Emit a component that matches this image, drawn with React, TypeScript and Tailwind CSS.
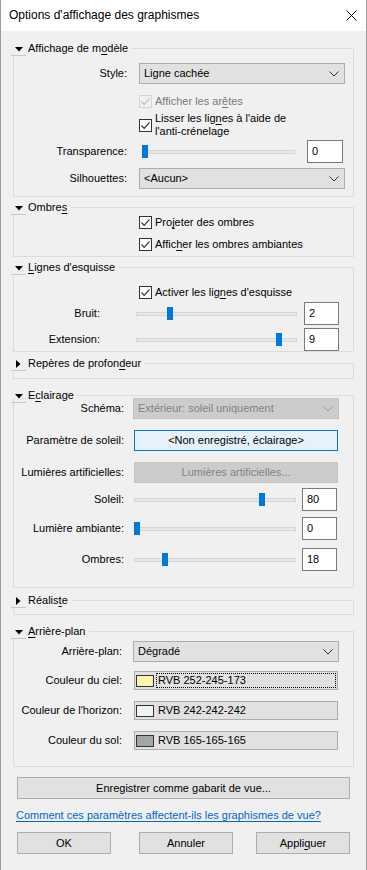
import React from "react";

function Tri({ open }: { open: boolean }) {
  return open ? (
    <svg width="8" height="5" viewBox="0 0 8 5">
      <path d="M0 0H8L4 4.5Z" fill="#000" />
    </svg>
  ) : (
    <svg width="5" height="8" viewBox="0 0 5 8">
      <path d="M0 0V8L4.5 4Z" fill="#000" />
    </svg>
  );
}

function U({ children }: { children: React.ReactNode }) {
  return <span className="underline underline-offset-[2px]">{children}</span>;
}

function Section({
  title,
  open = true,
  className = "",
  boxClass = "",
  children,
}: {
  title: React.ReactNode;
  open?: boolean;
  className?: string;
  boxClass?: string;
  children?: React.ReactNode;
}) {
  return (
    <div className={`ml-[10px] w-[343px] ${className}`}>
      <div className="flex h-[15px]">
        <div className="flex h-[15px] w-[15px] shrink-0 items-center justify-center border-b border-[#c8c8c8] pt-[2px]">
          <Tri open={open} />
        </div>
        <span className="ml-[2px] whitespace-nowrap leading-[15px]">{title}</span>
        <div className="ml-[4px] mt-[7px] h-[8px] flex-1 border-r border-t border-[#dcdcdc]" />
      </div>
      <div className={`ml-[2px] border-x border-b border-[#dcdcdc] ${boxClass}`}>{children}</div>
    </div>
  );
}

function Check({ disabled }: { disabled?: boolean }) {
  return (
    <div
      className={`flex h-[13px] w-[13px] shrink-0 items-center justify-center border ${
        disabled ? "border-[#d4d4d4] bg-[#f0f0f0]" : "border-[#333333] bg-white"
      }`}
    >
      <svg width="11" height="11" viewBox="0 0 11 11">
        <path
          d="M1.5 5.5L4.2 8.3L9.5 2.3"
          fill="none"
          stroke={disabled ? "#bcbcbc" : "#333333"}
          strokeWidth="1.2"
        />
      </svg>
    </div>
  );
}

function Chevron({ color = "#333" }: { color?: string }) {
  return (
    <svg width="10" height="6" viewBox="0 0 10 6">
      <path d="M0.5 0.5L5 5L9.5 0.5" fill="none" stroke={color} strokeWidth="1" />
    </svg>
  );
}

function Select({
  value,
  className = "",
  disabled,
}: {
  value: string;
  className?: string;
  disabled?: boolean;
}) {
  return (
    <div
      className={`flex h-[21px] items-center justify-between border pl-[4px] pr-[5px] ${
        disabled ? "border-[#c4c4c4] bg-[#cccccc] text-[#838383]" : "border-[#adadad] bg-[#e1e1e1]"
      } ${className}`}
    >
      <span className="whitespace-nowrap">{value}</span>
      <Chevron color={disabled ? "#9a9a9a" : "#333"} />
    </div>
  );
}

function Slider({ pct, className = "" }: { pct: number; className?: string }) {
  return (
    <div className={`relative h-[13px] ${className}`}>
      <div className="absolute left-0 right-0 top-[5px] h-[4px] border border-[#d6d6d6] bg-[#e7e7e7]" />
      <div
        className="absolute top-0 h-[13px] w-[6px] bg-[#0078d7]"
        style={{ left: `calc(${pct} * (100% - 6px))` }}
      />
    </div>
  );
}

function Field({ value, className = "" }: { value: string; className?: string }) {
  return (
    <div className={`h-[23px] border border-[#7a7a7a] bg-white pl-[4px] pt-[2px] leading-[16px] ${className}`}>
      {value}
    </div>
  );
}

function ColorBox({ color, label, focus }: { color: string; label: string; focus?: boolean }) {
  return (
    <div className="flex h-[19px] w-[204px] items-center border border-[#adadad] bg-[#e1e1e1] pl-[1px] pr-[1px]">
      <div className="h-[12px] w-[18px] shrink-0 border border-[#333333]" style={{ backgroundColor: color }} />
      <div
        className={`ml-[2px] flex h-[15px] flex-1 items-center pl-[1px] ${
          focus ? "border border-dotted border-[#000]" : "border border-transparent"
        }`}
      >
        {label}
      </div>
    </div>
  );
}

function Btn({ children, className = "" }: { children: React.ReactNode; className?: string }) {
  return (
    <div className={`flex h-[22px] items-center justify-center border border-[#adadad] bg-[#e1e1e1] ${className}`}>
      {children}
    </div>
  );
}

export default function App() {
  return (
    <div className="h-[870px] w-[367px] overflow-hidden border-x border-[#9a9a9a] bg-[#f0f0f0] font-['Liberation_Sans',Arial,sans-serif] text-[11px] leading-[15px] text-black">
      {/* Title bar */}
      <div className="flex h-[31px] items-center justify-between bg-white pl-[8px] pr-[9px]">
        <span className="text-[12px]">Options d'affichage des graphismes</span>
        <svg width="11" height="11" viewBox="0 0 11 11">
          <path d="M0.5 0.5L10.5 10.5M10.5 0.5L0.5 10.5" stroke="#000" strokeWidth="1" />
        </svg>
      </div>

      {/* Affichage de modèle */}
      <Section
        className="mt-[10px]"
        title={
          <>
            Affichage de m<U>o</U>dèle
          </>
        }
        boxClass="pt-[7px] pb-[7px]"
      >
        <div className="flex h-[21px] items-center">
          <div className="w-[113px] text-right">Style:</div>
          <Select value="Ligne cachée" className="ml-[12px] w-[206px]" />
        </div>
        <div className="mt-[11px] flex h-[13px] items-center pl-[125px]">
          <Check disabled />
          <span className="ml-[3px] text-[#7a7a7a]">
            Afficher les ar<U>ê</U>tes
          </span>
        </div>
        <div className="mt-[4px] flex h-[26px] items-center pl-[125px]">
          <Check />
          <div className="ml-[3px] flex flex-col leading-[13px]">
            <span>
              Lisser les lig<U>n</U>es à l'aide de
            </span>
            <span>l'anti-crénelage</span>
          </div>
        </div>
        <div className="mt-[2px] flex h-[23px] items-center">
          <div className="w-[113px] text-right">Transparence:</div>
          <Slider pct={0} className="ml-[15px] w-[153px]" />
          <Field value="0" className="ml-[12px] w-[36px]" />
        </div>
        <div className="mt-[5px] flex h-[21px] items-center">
          <div className="w-[113px] text-right">Silhouettes:</div>
          <Select value="<Aucun>" className="ml-[12px] w-[206px]" />
        </div>
      </Section>

      {/* Ombres */}
      <Section
        className="mt-[3px]"
        title={
          <>
            Ombre<U>s</U>
          </>
        }
        boxClass="pt-[1px] pb-[5px]"
      >
        <div className="flex h-[13px] items-center pl-[125px]">
          <Check />
          <span className="ml-[3px]">
            Pro<U>j</U>eter des ombres
          </span>
        </div>
        <div className="mt-[9px] flex h-[13px] items-center pl-[125px]">
          <Check />
          <span className="ml-[3px]">
            Affic<U>h</U>er les ombres ambiantes
          </span>
        </div>
      </Section>

      {/* Lignes d'esquisse */}
      <Section
        className="mt-[3px]"
        title={
          <>
            <U>L</U>ignes d'esquisse
          </>
        }
        boxClass="pt-[11px]"
      >
        <div className="flex h-[13px] items-center pl-[125px]">
          <Check />
          <span className="ml-[3px]">
            Activer les lig<U>n</U>es d'esquisse
          </span>
        </div>
        <div className="mt-[3px] flex h-[23px] items-center">
          <div className="w-[86px] text-right">Bruit:</div>
          <Slider pct={0.2} className="ml-[36px] w-[161px]" />
          <Field value="2" className="ml-[7px] w-[35px]" />
        </div>
        <div className="mt-[3px] flex h-[23px] items-center">
          <div className="w-[86px] text-right">Extension:</div>
          <Slider pct={0.9} className="ml-[36px] w-[161px]" />
          <Field value="9" className="ml-[7px] w-[35px]" />
        </div>
      </Section>

      {/* Repères de profondeur */}
      <Section
        className="mt-[4px]"
        open={false}
        title={
          <>
            Repères de profon<U>d</U>eur
          </>
        }
        boxClass="h-[8px]"
      />

      {/* Eclairage */}
      <Section
        className="mt-[9px]"
        title={
          <>
            E<U>c</U>lairage
          </>
        }
        boxClass="pb-[16px]"
      >
        <div className="-mt-[5px] flex h-[21px] items-center">
          <div className="w-[110px] text-right">Schéma:</div>
          <Select disabled value="Extérieur: soleil uniquement" className="ml-[9px] w-[206px]" />
        </div>
        <div className="mt-[11px] flex h-[21px] items-center">
          <div className="w-[110px] whitespace-nowrap text-right">Paramètre de soleil:</div>
          <div className="ml-[10px] flex h-[21px] w-[204px] items-center justify-center border border-[#0078d7] bg-[#e5f1fb]">
            &lt;Non enregistré, éclairage&gt;
          </div>
        </div>
        <div className="mt-[11px] flex h-[21px] items-center">
          <div className="w-[110px] whitespace-nowrap text-right">Lumières artificielles:</div>
          <div className="ml-[10px] flex h-[21px] w-[204px] items-center justify-center border border-[#c4c4c4] bg-[#cccccc] text-[#838383]">
            Lumières artificielles...
          </div>
        </div>
        <div className="mt-[5px] flex h-[23px] items-center">
          <div className="w-[110px] text-right">Soleil:</div>
          <Slider pct={0.8} className="ml-[10px] w-[162px]" />
          <Field value="80" className="ml-[6px] w-[35px]" />
        </div>
        <div className="mt-[6px] flex h-[23px] items-center">
          <div className="w-[110px] whitespace-nowrap text-right">Lumière ambiante:</div>
          <Slider pct={0} className="ml-[10px] w-[162px]" />
          <Field value="0" className="ml-[6px] w-[35px]" />
        </div>
        <div className="mt-[8px] flex h-[23px] items-center">
          <div className="w-[110px] text-right">Ombres:</div>
          <Slider pct={0.18} className="ml-[10px] w-[162px]" />
          <Field value="18" className="ml-[6px] w-[35px]" />
        </div>
      </Section>

      {/* Réaliste */}
      <Section
        className="mt-[5px]"
        open={false}
        title={
          <>
            Réalis<U>t</U>e
          </>
        }
        boxClass="h-[7px]"
      />

      {/* Arrière-plan */}
      <Section
        className="mt-[9px]"
        title={
          <>
            <U>A</U>rrière-plan
          </>
        }
        boxClass="pt-[2px] pb-[16px]"
      >
        <div className="flex h-[21px] items-center">
          <div className="w-[108px] text-right">Arrière-plan:</div>
          <Select value="Dégradé" className="ml-[11px] w-[206px]" />
        </div>
        <div className="mt-[9px] flex h-[19px] items-center">
          <div className="w-[108px] whitespace-nowrap text-right">Couleur du ciel:</div>
          <div className="ml-[12px]">
            <ColorBox color="rgb(252,245,173)" label="RVB 252-245-173" focus />
          </div>
        </div>
        <div className="mt-[11px] flex h-[19px] items-center">
          <div className="w-[108px] whitespace-nowrap text-right">Couleur de l'horizon:</div>
          <div className="ml-[12px]">
            <ColorBox color="rgb(242,242,242)" label="RVB 242-242-242" />
          </div>
        </div>
        <div className="mt-[11px] flex h-[19px] items-center">
          <div className="w-[108px] whitespace-nowrap text-right">Couleur du sol:</div>
          <div className="ml-[12px]">
            <ColorBox color="rgb(165,165,165)" label="RVB 165-165-165" />
          </div>
        </div>
      </Section>

      <Btn className="ml-[16px] mt-[10px] w-[333px]">Enregistrer comme gabarit de vue...</Btn>

      <div className="ml-[15px] mt-[8px] h-[16px] leading-[16px] text-[#0066cc] underline underline-offset-[2px]">
        Comment ces paramètres affectent-ils les graphismes de vue?
      </div>

      <div className="mt-[9px] flex">
        <Btn className="ml-[16px] w-[94px]">OK</Btn>
        <Btn className="ml-[28px] w-[94px]">Annuler</Btn>
        <Btn className="ml-[23px] w-[94px]">
          Appli<U>q</U>uer
        </Btn>
      </div>
    </div>
  );
}
